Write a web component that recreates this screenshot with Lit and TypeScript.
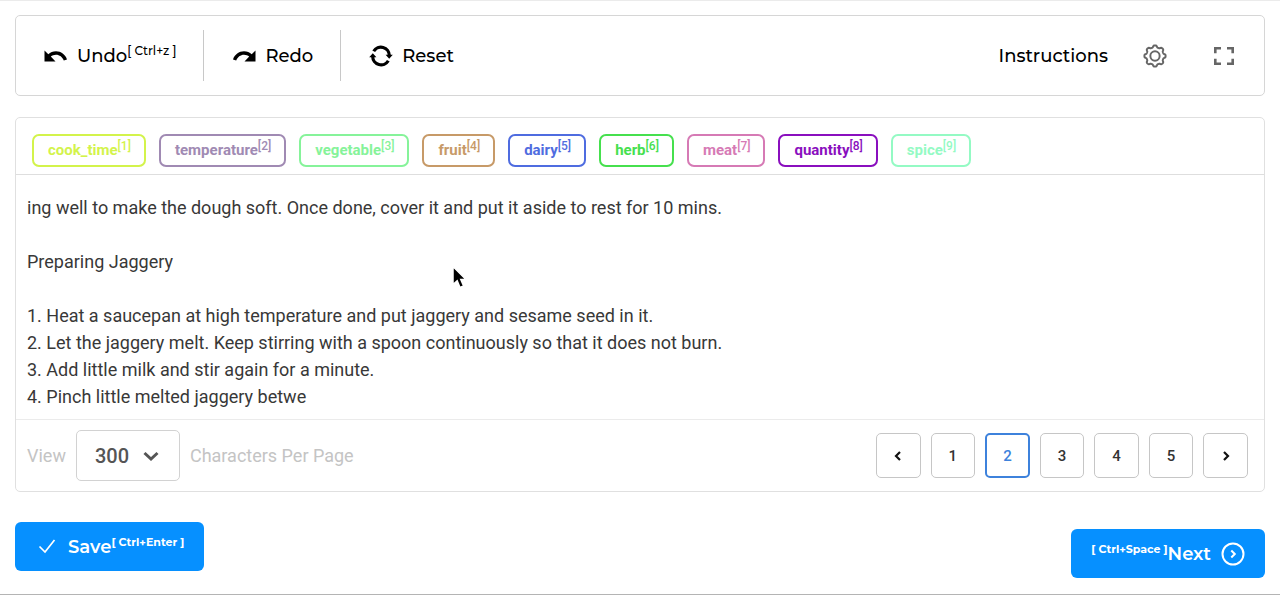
import { LitElement, html, css, svg } from "lit";
import { customElement, state } from "lit/decorators.js";

const TAGS = [
  { name: "cook_time", color: "#d3f34b" },
  { name: "temperature", color: "#a08ab3" },
  { name: "vegetable", color: "#86f39a" },
  { name: "fruit", color: "#c79a68" },
  { name: "dairy", color: "#4f6ce0" },
  { name: "herb", color: "#46e04e" },
  { name: "meat", color: "#d67ab5" },
  { name: "quantity", color: "#8a0fbe" },
  { name: "spice", color: "#94fac4" },
];

const TEXT = `ing well to make the dough soft. Once done, cover it and put it aside to rest for 10 mins.

Preparing Jaggery

1. Heat a saucepan at high temperature and put jaggery and sesame seed in it.
2. Let the jaggery melt. Keep stirring with a spoon continuously so that it does not burn.
3. Add little milk and stir again for a minute.
4. Pinch little melted jaggery betwe`;

// Scalloped outline of the settings gear, eight lobes around the centre.
function gearPath(): string {
  const lobes = 8;
  const points: string[] = [];
  for (let i = 0; i <= 128; i++) {
    const a = (i / 128) * Math.PI * 2;
    const r = 8.9 + 0.9 * Math.tanh(2 * Math.cos(lobes * a));
    points.push(`${(12 + r * Math.sin(a)).toFixed(2)} ${(12 - r * Math.cos(a)).toFixed(2)}`);
  }
  return `M${points.join("L")}Z`;
}

@customElement("app-root")
export class AppRoot extends LitElement {
  @state() private page = 2;

  static styles = css`
    :host {
      display: block;
      box-sizing: border-box;
      min-height: 100vh;
      padding: 14px 15px 16px;
      border-top: 1px solid #ebebeb;
      border-bottom: 1px solid #b4b4b4;
      background: #fff;
      color: #111;
      font-family: Roboto, "Liberation Sans", sans-serif;
      position: relative;
    }
    * { box-sizing: border-box; }
    button, select { font: inherit; color: inherit; background: none; border: 0; padding: 0; margin: 0; cursor: pointer; }
    svg { display: block; flex: none; }
    sup { line-height: 0; vertical-align: 6px; }

    .toolbar {
      display: flex;
      align-items: center;
      justify-content: space-between;
      min-height: 81px;
      border: 1px solid #d6d6d6;
      border-radius: 5px;
      color: #000;
      font-family: Montserrat, Inter, sans-serif;
      font-size: 18px;
      font-weight: 500;
    }
    .group { display: flex; align-items: center; }
    .tool {
      display: flex;
      align-items: center;
      gap: 9px;
      height: 51px;
      padding: 0 27px 0 28px;
      white-space: nowrap;
    }
    .tool + .tool { border-left: 1px solid #c8c8c8; }
    .tool sup { font-size: 12px; }
    .tool sup, .action sup { vertical-align: 7px; }
    .right { gap: 34px; padding-right: 28px; }
    .right button { color: #666; }
    .right .instructions { color: #000; }
    .right .full { margin-left: 10px; }

    .panel {
      margin-top: 21px;
      border: 1px solid #e0e0e0;
      border-radius: 5px;
    }
    .tags {
      display: flex;
      flex-wrap: wrap;
      gap: 13px;
      padding: 16px 16px 7px;
      border-bottom: 1px solid #dedede;
    }
    .tag {
      height: 33px;
      padding: 0 13px 0 14px;
      border: 2px solid currentColor;
      border-radius: 7px;
      font-size: 15px;
      font-weight: 700;
      line-height: 27px;
    }
    .tag sup { font-size: 12px; font-weight: 500; vertical-align: 5px; }
    .text {
      margin: 0;
      padding: 19px 11px 9px;
      color: #383838;
      font-size: 18px;
      line-height: 27px;
      white-space: pre-wrap;
    }
    .pager {
      display: flex;
      align-items: center;
      justify-content: space-between;
      padding: 10px 16px 10px 11px;
      border-top: 1px solid #ebebeb;
      color: #c4c4c4;
      font-size: 18px;
    }
    .view { display: flex; align-items: center; gap: 10px; }
    .picker { display: grid; align-items: center; width: 104px; }
    .picker select {
      grid-area: 1 / 1;
      appearance: none;
      width: 100%;
      height: 51px;
      padding: 0 18px;
      border: 1px solid #d2d2d2;
      border-radius: 5px;
      color: #555;
      font-size: 20px;
      font-weight: 500;
    }
    .picker svg { grid-area: 1 / 1; justify-self: end; margin-right: 20px; pointer-events: none; }
    .pages { display: grid; grid-template-columns: repeat(7, 1fr); gap: 10px; width: 372px; }
    .page {
      display: grid;
      place-items: center;
      height: 45px;
      border: 1px solid #c6c6c6;
      border-radius: 5px;
      color: #333;
      font-size: 15px;
      font-weight: 500;
    }
    .page.current { border: 2px solid #3d82dc; color: #3d82dc; }

    .actions {
      display: flex;
      justify-content: space-between;
      align-items: flex-start;
      padding-top: 30px;
    }
    .action {
      display: flex;
      align-items: center;
      height: 49px;
      border-radius: 6px;
      background: #0690ff;
      color: #fff;
      font-family: Montserrat, Inter, sans-serif;
      font-size: 18px;
      font-weight: 600;
      white-space: nowrap;
    }
    .action sup { font-size: 11px; font-weight: 700; }
    .save { gap: 9px; padding: 0 20px; }
    .next { gap: 10px; margin-top: 7px; padding: 0 20px; }
    .pointer { position: absolute; left: 450px; top: 263px; }
  `;

  render() {
    return html`
      <header class="toolbar">
        <div class="group">
          <button class="tool">
            <svg width="24" height="24" viewBox="0 0 24 24"><path d="M.5 6.500L4.300 10.200C6.300 8.400 9 7.300 12 7.300c5 0 9.300 3.200 11 8.100l-3.200 1.200C18.500 13 15.500 10.700 12 10.700c-2 0-3.800.7-5.200 1.900L11.500 17.500H.5z" fill="currentColor"/></svg>
            <span>Undo<sup>[ Ctrl+z ]</sup></span>
          </button>
          <button class="tool">
            <svg width="24" height="24" viewBox="0 0 24 24"><path d="M23.500 6.500L19.700 10.200C17.700 8.400 15 7.300 12 7.300c-5 0-9.300 3.200-11 8.100l3.200 1.200C5.500 13 8.500 10.700 12 10.700c2 0 3.800.7 5.200 1.900L12.500 17.500h11z" fill="currentColor"/></svg>
            <span>Redo</span>
          </button>
          <button class="tool">
            <svg width="24" height="24" viewBox="0 0 24 24"><g fill="none" stroke="currentColor" stroke-width="3.200"><path d="M4.700 7.200A8.400 8.400 0 0 1 20.300 11.500"/><path d="M19.300 16.800A8.400 8.400 0 0 1 3.700 12.500"/></g><path d="M16.600 10.800h7.200L20.200 14.800zM.2 13.200h7.200L3.800 9.200z" fill="currentColor"/></svg>
            <span>Reset</span>
          </button>
        </div>
        <div class="group right">
          <button class="instructions">Instructions</button>
          <button aria-label="Settings">
            <svg width="26" height="26" viewBox="0 0 24 24" fill="none" stroke="currentColor" stroke-width="1.800"><path d=${gearPath()}/><circle cx="12" cy="12" r="4.300"/></svg>
          </button>
          <button class="full" aria-label="Fullscreen">
            <svg width="24" height="24" viewBox="0 0 24 24" fill="none" stroke="currentColor" stroke-width="2.600"><path d="M3.300 9.300V4.300H9M15 4.300h5.700v5M20.700 14.700v5H15M9 19.700H3.300v-5"/></svg>
          </button>
        </div>
      </header>

      <main class="panel">
        <div class="tags">
          ${TAGS.map((t, i) => html`<button class="tag" style="color:${t.color}">${t.name}<sup>[${i + 1}]</sup></button>`)}
        </div>
        <p class="text">${TEXT}</p>
        <div class="pager">
          <div class="view">
            <label for="count">View</label>
            <div class="picker">
              <select id="count"><option>300</option><option>500</option><option>1000</option></select>
              <svg width="18" height="18" viewBox="0 0 18 18" fill="none" stroke="#555" stroke-width="3"><path d="M2.500 6L9 12l6.500-6"/></svg>
            </div>
            <span>Characters Per Page</span>
          </div>
          <nav class="pages" aria-label="Pages">
            ${this.arrow("Previous page", -1, svg`<path d="M8 2L4 6l4 4"/>`)}
            ${[1, 2, 3, 4, 5].map((n) => html`<button class="page ${n === this.page ? "current" : ""}" @click=${() => (this.page = n)}>${n}</button>`)}
            ${this.arrow("Next page", 1, svg`<path d="M4 2l4 4-4 4"/>`)}
          </nav>
        </div>
      </main>

      <footer class="actions">
        <button class="action save">
          <svg width="24" height="24" viewBox="0 0 24 24" fill="none" stroke="currentColor" stroke-width="1.700"><path d="M4.500 11.500L10 17L19.500 5"/></svg>
          <span>Save<sup>[ Ctrl+Enter ]</sup></span>
        </button>
        <button class="action next">
          <span><sup>[ Ctrl+Space ]</sup>Next</span>
          <svg width="24" height="24" viewBox="0 0 24 24" fill="none" stroke="currentColor" stroke-width="2"><circle cx="12" cy="12" r="10.500"/><path d="M10.300 8.500l3.500 3.500-3.500 3.500"/></svg>
        </button>
      </footer>

      <svg class="pointer" width="20" height="28" viewBox="0 0 20 28" aria-hidden="true"><path d="M3 2.500V20.500L7.200 16.700L10 23.500L13.600 22L10.800 15.500H16z" fill="#000" stroke="#fff" stroke-width="1.500"/></svg>
    `;
  }

  private arrow(label: string, step: number, shape: unknown) {
    return html`<button class="page" aria-label=${label} @click=${() => (this.page = Math.min(5, Math.max(1, this.page + step)))}>
      <svg width="12" height="12" viewBox="0 0 12 12" fill="none" stroke="#111" stroke-width="2.200">${shape}</svg>
    </button>`;
  }
}
